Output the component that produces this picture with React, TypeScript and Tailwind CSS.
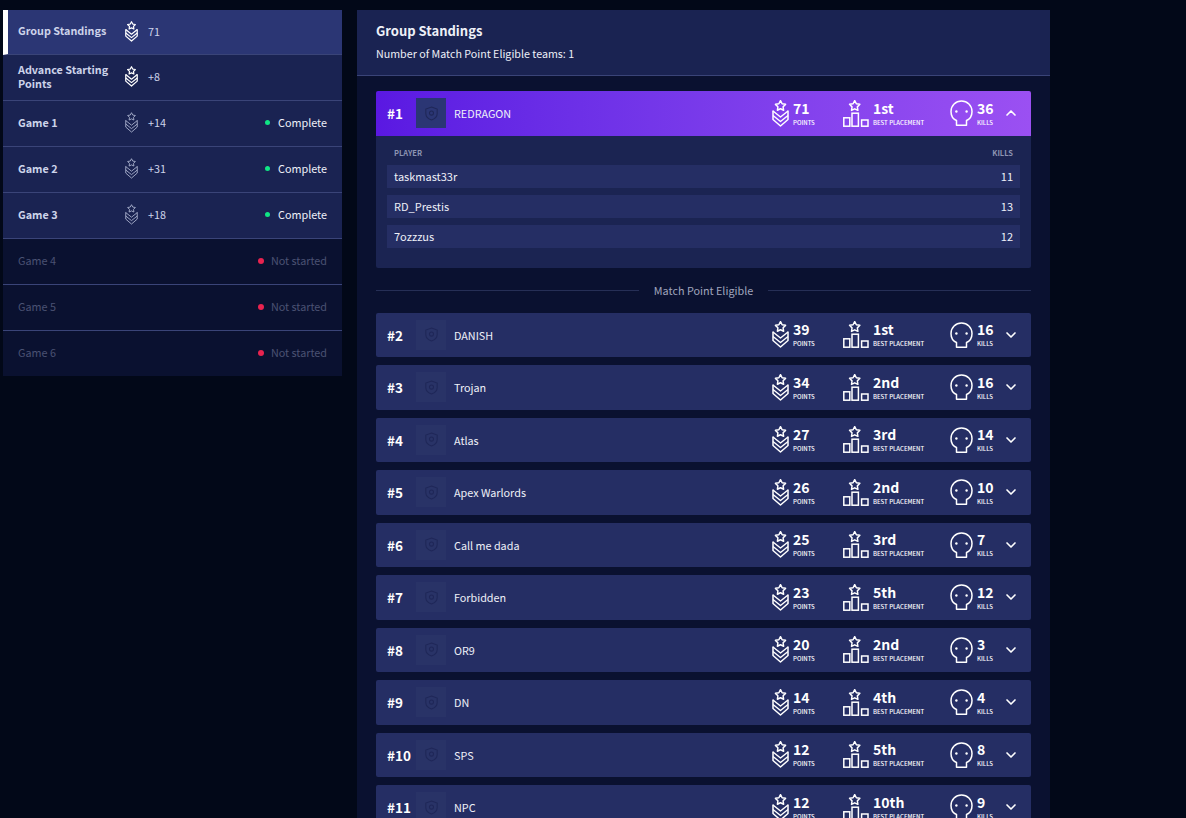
import type { ReactNode } from 'react';
import { ChevronDown, ChevronUp } from 'lucide-react';

const FONT = '"Noto Sans CJK SC", "Noto Sans", sans-serif';

const Star = ({ x, y, r }: { x: number; y: number; r: number }) => {
  const pts: string[] = [];
  for (let i = 0; i < 10; i++) {
    const rad = i % 2 === 0 ? r : r * 0.52;
    const a = (Math.PI / 5) * i - Math.PI / 2;
    pts.push(`${(x + rad * Math.cos(a)).toFixed(2)},${(y + rad * Math.sin(a)).toFixed(2)}`);
  }
  return <polygon points={pts.join(' ')} strokeLinejoin="round" />;
};

const RankIcon = ({ className, strokeWidth = 1.5 }: { className?: string; strokeWidth?: number }) => (
  <svg viewBox="0 0 17 27" fill="none" stroke="currentColor" strokeWidth={strokeWidth} className={className}>
    <Star x={8.5} y={6} r={5.3} />
    <path d="M1 10.5 V19.5 L8.5 26 L16 19.5 V10.5" strokeLinejoin="round" />
    <path d="M1 11 L8.5 17 L16 11" strokeLinejoin="round" />
    <path d="M1 15.5 L8.5 21.5 L16 15.5" strokeLinejoin="round" />
  </svg>
);

const PodiumIcon = () => (
  <svg viewBox="0 0 26 27" fill="none" stroke="white" strokeWidth={1.5} className="w-[26px] h-[27px] shrink-0">
    <Star x={11.7} y={6} r={5.4} />
    <rect x="0.8" y="17.8" width="6" height="8.4" />
    <rect x="9" y="13.2" width="6.4" height="13" />
    <rect x="18.6" y="20" width="6.4" height="6.2" />
  </svg>
);

const SkullIcon = () => (
  <svg viewBox="0 0 23 26" fill="none" stroke="white" strokeWidth={1.5} className="w-[23px] h-[26px] shrink-0">
    <path
      d="M6.5 25.2 V20.5 C2.8 19 1 15 1 11.5 C1 5.7 5.7 1 11.5 1 C17.3 1 22 5.7 22 11.5 C22 15 20.2 19 16.5 20.5 V25.2 Z"
      strokeLinejoin="round"
    />
    <circle cx="6.4" cy="11.5" r="1.2" fill="white" stroke="none" />
    <circle cx="16.6" cy="11.5" r="1.2" fill="white" stroke="none" />
  </svg>
);

const TeamLogo = ({ active }: { active?: boolean }) => (
  <div className={`w-[30px] h-[30px] flex items-center justify-center shrink-0 ${active ? 'bg-[#2b3674]' : 'bg-[#293367]'}`}>
    <svg viewBox="0 0 16 18" fill="none" stroke="#1f2758" strokeWidth={1.3} className="w-[13px] h-[15px]">
      <path d="M8 1 L15 3.5 V9 C15 13 11.5 15.8 8 17 C4.5 15.8 1 13 1 9 V3.5 Z" />
      <circle cx="8" cy="8.5" r="2.5" />
    </svg>
  </div>
);

const Stat = ({ icon, value, label, width }: { icon: ReactNode; value: string; label: string; width: string }) => (
  <div className={`flex items-center gap-[4px] shrink-0 ${width}`}>
    {icon}
    <div className="flex flex-col">
      <span className="text-[14px] leading-[17px] font-bold text-white">{value}</span>
      <span className="mt-[1px] text-[6px] leading-[9px] font-medium text-white uppercase whitespace-nowrap">{label}</span>
    </div>
  </div>
);

const TeamRow = ({ rank, name, points, best, kills, active }: { rank: number; name: string; points: number; best: string; kills: number; active?: boolean }) => (
  <div className={`flex items-center h-[44.5px] pl-[11px] pr-[12px] rounded-[2px] ${active ? 'bg-gradient-to-r from-[#5a18e2] to-[#9b50f2] rounded-b-none' : 'bg-[#252e64]'}`}>
    <span className="w-[29px] text-[13.5px] font-bold text-white">#{rank}</span>
    <TeamLogo active={active} />
    <span className="ml-[8px] flex-1 text-[10.8px] text-[#eef0f8]">{name}</span>
    <Stat width="w-[71px]" icon={<RankIcon className="w-[17px] h-[27px] text-white shrink-0" />} value={String(points)} label="Points" />
    <Stat width="w-[107px]" icon={<PodiumIcon />} value={best} label="Best Placement" />
    <Stat width="w-[53px]" icon={<SkullIcon />} value={String(kills)} label="Kills" />
    {active ? <ChevronUp className="w-4 h-4 text-white" strokeWidth={2.5} /> : <ChevronDown className="w-4 h-4 text-white" strokeWidth={2.5} />}
  </div>
);

const teams = [
  { rank: 2, name: 'DANISH', points: 39, best: '1st', kills: 16 },
  { rank: 3, name: 'Trojan', points: 34, best: '2nd', kills: 16 },
  { rank: 4, name: 'Atlas', points: 27, best: '3rd', kills: 14 },
  { rank: 5, name: 'Apex Warlords', points: 26, best: '2nd', kills: 10 },
  { rank: 6, name: 'Call me dada', points: 25, best: '3rd', kills: 7 },
  { rank: 7, name: 'Forbidden', points: 23, best: '5th', kills: 12 },
  { rank: 8, name: 'OR9', points: 20, best: '2nd', kills: 3 },
  { rank: 9, name: 'DN', points: 14, best: '4th', kills: 4 },
  { rank: 10, name: 'SPS', points: 12, best: '5th', kills: 8 },
  { rank: 11, name: 'NPC', points: 12, best: '10th', kills: 9 },
];

const players = [
  { name: 'taskmast33r', kills: 11 },
  { name: 'RD_Prestis', kills: 13 },
  { name: '7ozzzus', kills: 12 },
];

const navItems = [
  { label: 'Group Standings', value: '71', state: 'active' },
  { label: 'Advance Starting Points', value: '+8', state: 'plain' },
  { label: 'Game 1', value: '+14', state: 'complete' },
  { label: 'Game 2', value: '+31', state: 'complete' },
  { label: 'Game 3', value: '+18', state: 'complete' },
  { label: 'Game 4', state: 'pending' },
  { label: 'Game 5', state: 'pending' },
  { label: 'Game 6', state: 'pending' },
];

const Sidebar = () => (
  <aside className="w-[339px] shrink-0">
    {navItems.map((item, i) => {
      const pending = item.state === 'pending';
      const isLast = i === navItems.length - 1;
      return (
        <div
          key={item.label}
          className={`flex items-center pb-[2px] pr-[15px] ${i === 0 || isLast ? 'h-[45px]' : 'h-[46px]'} ${isLast ? '' : 'border-b border-[#3a4478]'} ${
            item.state === 'active'
              ? 'bg-[#2b3674] border-l-[5px] border-l-white pl-[10px]'
              : pending
                ? 'bg-[#0a1130] pl-[15px]'
                : 'bg-[#1a2352] pl-[15px]'
          }`}
        >
          <span className={`w-[107px] pb-[2px] text-[10.8px] leading-[14px] ${pending ? 'text-[#4a5273]' : 'font-bold text-[#cdd3ea]'}`}>
            {item.label}
          </span>
          {item.value && (
            <>
              <RankIcon
                strokeWidth={item.state === 'complete' ? 1.1 : 1.6}
                className={`w-[13px] h-[21px] shrink-0 ${item.state === 'complete' ? 'text-[#b4bbd6]' : 'text-white'}`}
              />
              <span className="ml-[10px] text-[10.8px] text-[#cdd3ea]">{item.value}</span>
            </>
          )}
          {item.state === 'complete' && (
            <div className="ml-auto flex items-center gap-[8px]">
              <span className="w-[5px] h-[5px] rounded-full bg-[#10e585]" />
              <span className="text-[10.8px] text-[#eef0f8]">Complete</span>
            </div>
          )}
          {pending && (
            <div className="ml-auto flex items-center gap-[7px]">
              <span className="w-[6px] h-[6px] rounded-full bg-[#e8234f]" />
              <span className="text-[10.8px] text-[#4a5273]">Not started</span>
            </div>
          )}
        </div>
      );
    })}
  </aside>
);

export default function App() {
  return (
    <div className="h-[818px] overflow-hidden bg-[#020818]" style={{ fontFamily: FONT }}>
      <div className="flex items-start gap-[15px] pt-[10px] pl-[3px]">
        <Sidebar />

        <main className="w-[693px] shrink-0 rounded-t-[2px] bg-[#0a1130]">
          <header className="h-[66px] px-[19px] pt-[11px] bg-[#1a2352] border-b border-[#3a4478]">
            <h1 className="text-[13px] leading-[20px] font-bold text-[#eef0f8]">Group Standings</h1>
            <p className="mt-[5px] text-[10.7px] leading-[16px] text-[#eef0f8]">Number of Match Point Eligible teams: 1</p>
          </header>

          <div className="px-[19px] pt-[15px] pb-6">
            <TeamRow rank={1} name="REDRAGON" points={71} best="1st" kills={36} active />
            <div className="h-[132px] bg-[#1b2452] px-[11px] pt-[12px] rounded-b-[2px]">
              <div className="flex justify-between px-[7px] text-[7.5px] leading-[10px] font-bold text-[#8d94b3]">
                <span>PLAYER</span>
                <span>KILLS</span>
              </div>
              <div className="mt-[7px] flex flex-col gap-[7px]">
                {players.map((p) => (
                  <div key={p.name} className="flex items-center justify-between h-[23px] px-[7px] bg-[#252e64] text-[11px] text-[#eef0f8]">
                    <span>{p.name}</span>
                    <span>{p.kills}</span>
                  </div>
                ))}
              </div>
            </div>

            <div className="flex items-center gap-[15px] h-[45px]">
              <div className="flex-1 h-px bg-[#262f56]" />
              <span className="text-[10.8px] text-[#a0a5bd]">Match Point Eligible</span>
              <div className="flex-1 h-px bg-[#262f56]" />
            </div>

            <div className="flex flex-col gap-2">
              {teams.map((t) => (
                <TeamRow key={t.rank} {...t} />
              ))}
            </div>
          </div>
        </main>
      </div>
    </div>
  );
}
